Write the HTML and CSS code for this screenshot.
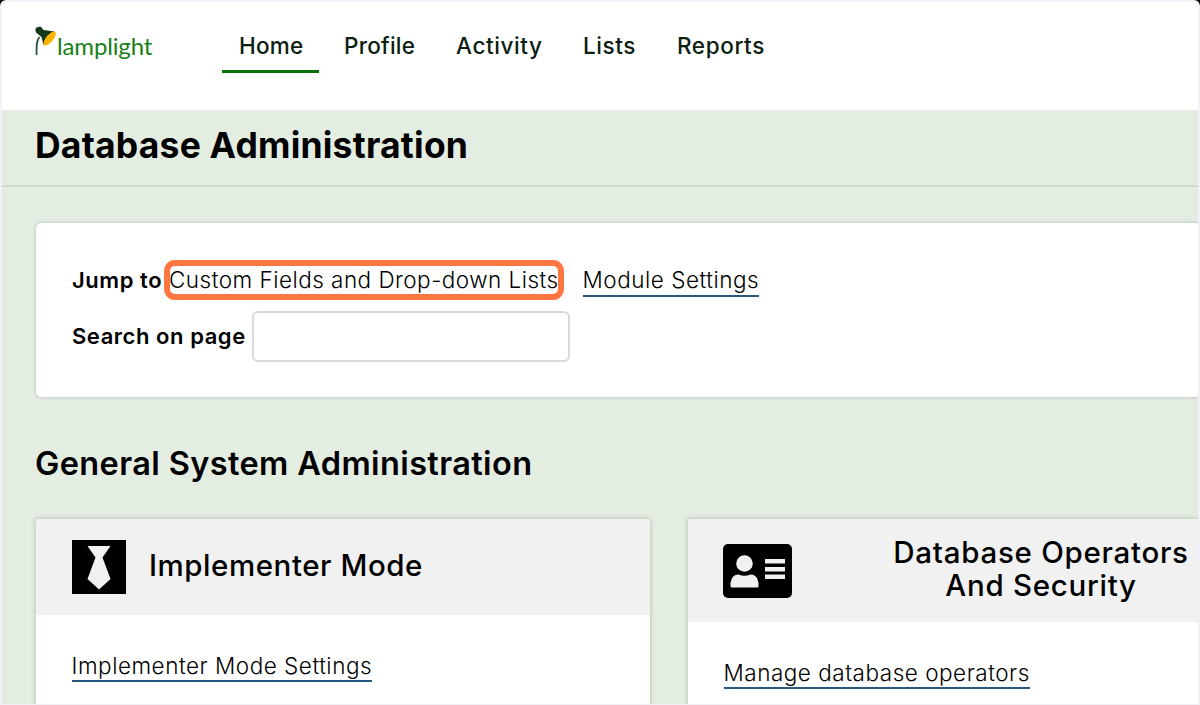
FILE: index.html
```html
<!DOCTYPE html>
<html lang="en">
<head>
<meta charset="utf-8">
<title>Database Administration</title>
<link rel="stylesheet" href="styles.css">
</head>
<body>
<div class="frame">
  <header class="topbar">
    <a class="logo">
      <svg class="logo-mark" width="21" height="30" viewBox="0 0 21 30">
        <path d="M4.500 11C1.300 15 1.500 20 1.600 29" fill="none" stroke="#285038" stroke-width="1.800"/>
        <path d="M.3 3Q1.500.2 6 .8L8.500 4 19.500 5.500 8.500 19 6.500 11 1 6.500Z" fill="#14381a"/>
        <ellipse cx="14.700" cy="12.500" rx="8.600" ry="3.600" transform="rotate(-51 14.700 12.500)" fill="#ffb400"/>
      </svg>
      <span class="logo-text">lamplight</span>
    </a>
    <nav class="nav">
      <a class="nav-item nav-active">Home</a>
      <a class="nav-item nav-profile">Profile</a>
      <a class="nav-item nav-activity">Activity</a>
      <a class="nav-item nav-lists">Lists</a>
      <a class="nav-item nav-reports">Reports</a>
    </nav>
  </header>
  <div class="title-bar"><h1 class="page-title">Database Administration</h1></div>
  <main class="content">
    <section class="panel">
      <div class="jump-row">
        <span class="label jump-label">Jump to</span>
        <a class="highlight">Custom Fields and Drop-down Lists</a>
        <a class="link module-link">Module Settings</a>
      </div>
      <div class="search-row">
        <label class="label search-label" for="search">Search on page</label>
        <input class="search" id="search" type="text">
      </div>
    </section>
    <h2 class="section-title">General System Administration</h2>
    <div class="cards">
      <section class="card">
        <div class="card-head">
          <svg class="tie" width="54" height="54" viewBox="0 0 54 54">
            <rect width="54" height="54"/>
            <path d="M15.500 6H38.500L30.500 17.500 38.500 39 27 49.500 15.500 39 23.500 17.500Z" fill="#f1f1f1"/>
          </svg>
          <h3 class="card-title mode-title">Implementer Mode</h3>
        </div>
        <div class="card-body"><a class="link card-link">Implementer Mode Settings</a></div>
      </section>
      <section class="card">
        <div class="card-head card-head-tall">
          <svg class="id-card" width="69" height="54" viewBox="0 0 69 54">
            <rect width="69" height="54" rx="5"/>
            <g fill="#f1f1f1">
              <circle cx="21.500" cy="19.500" r="8.300"/>
              <path d="M7.500 42V39Q8.500 30.500 15.500 30.500 21.500 33 27.500 30.500 34.500 30.500 35.500 39V42Q35.500 43.500 34 43.500H9Q7.500 43.500 7.500 42Z"/>
              <path d="M42 15H62V19.500H42ZM42 23H62V27.500H42ZM42 30.500H62V35H42Z"/>
            </g>
          </svg>
          <h3 class="card-title operators-title">Database Operators<br>And Security</h3>
        </div>
        <div class="card-body"><a class="link card-link">Manage database operators</a></div>
      </section>
    </div>
  </main>
</div>
</body>
</html>
```
FILE: styles.css
```css
* { box-sizing: border-box; }
html { background: #000; }
body { margin: 0; font-family: Inter, "Liberation Sans", sans-serif; color: #000; }
h1, h2, h3 { margin: 0; white-space: nowrap; }
.frame { height: 705px; border: 2px solid #f1f0f6; border-bottom-width: 1px; border-radius: 6px 6px 0 0; background: #e4ede2; overflow: hidden; }
.topbar { height: 108px; background: #fff; display: flex; align-items: flex-start; padding: 24px 32px 0; }
.logo { width: 188px; display: flex; flex: none; color: #168016; }
.logo-mark { flex: none; margin-left: 1px; }
.logo-text { font: 400 24px/30px Lato, sans-serif; letter-spacing: -.15px; margin: 5px 0 0 1px; }
.nav { display: flex; gap: 8px; }
.nav-item { flex: none; width: 97px; height: 47px; padding: 5px 0 0 17px; font-size: 22.500px; line-height: 30px; font-weight: 500; color: #0b2010; letter-spacing: .25px; white-space: nowrap; }
.nav-profile { width: 104px; }
.nav-activity { width: 119px; letter-spacing: .6px; }
.nav-lists { width: 86px; letter-spacing: .6px; }
.nav-reports { width: 124px; letter-spacing: .6px; }
.nav-active { border-bottom: 3px solid #087008; }
.title-bar { height: 77px; border-bottom: 2px solid #d3d8d1; padding: 13px 33px 0; }
.page-title { font-size: 35.500px; line-height: 46px; font-weight: 700; letter-spacing: .2px; }
.content { padding: 36px 0 0 34px; }
.panel { width: 1190px; height: 174px; background: #fff; border-radius: 5px; padding: 37px 36px 0; box-shadow: 0 0 3px 1px #c4cbc3; }
.jump-row { display: flex; align-items: center; height: 40px; white-space: nowrap; }
.label { flex: none; font-size: 22px; font-weight: 600; line-height: 30px; white-space: nowrap; letter-spacing: .55px; }
.jump-label { width: 92px; }
.highlight { flex: none; width: 400px; height: 40px; border: 6px solid #ff7643; border-radius: 11px; line-height: 28px; font-size: 22.500px; font-weight: 300; letter-spacing: .48px; text-indent: -1px; white-space: nowrap; }
.link { font-size: 22.500px; font-weight: 300; line-height: 30px; border-bottom: 2px solid #285880; letter-spacing: .52px; white-space: nowrap; }
.module-link { margin: 2px 0 0 18.500px; }
.search-row { display: flex; align-items: center; height: 51px; margin-top: 11px; }
.search-label { width: 180px; margin-top: -2px; }
.search { width: 318px; height: 51px; border: 2px solid #dadada; border-radius: 6px; background: #fff; }
.section-title { font-size: 32.500px; line-height: 42px; font-weight: 600; letter-spacing: .38px; margin: 46px 0 0 -1px; }
.cards { display: grid; grid-template-columns: 614px 614px; gap: 38px; margin-top: 34px; }
.card { height: 240px; background: #fff; box-shadow: 0 0 4px 1px #c1c8c0; }
.card-head { height: 96px; background: #f1f1f1; display: flex; align-items: center; padding: 0 36px; }
.card-head-tall { height: 103px; }
.card-title { font-size: 29.500px; line-height: 33px; font-weight: 550; }
.mode-title { margin: -3px 0 0 23.500px; letter-spacing: .55px; }
.tie { margin-left: -.5px; }
.id-card { margin-left: -1px; }
.operators-title { margin: -4px 0 0 100px; width: 298px; text-align: center; letter-spacing: .72px; }
.card-body { padding: 36px 35.500px; }
.card-link { padding-bottom: 1px; }
```
